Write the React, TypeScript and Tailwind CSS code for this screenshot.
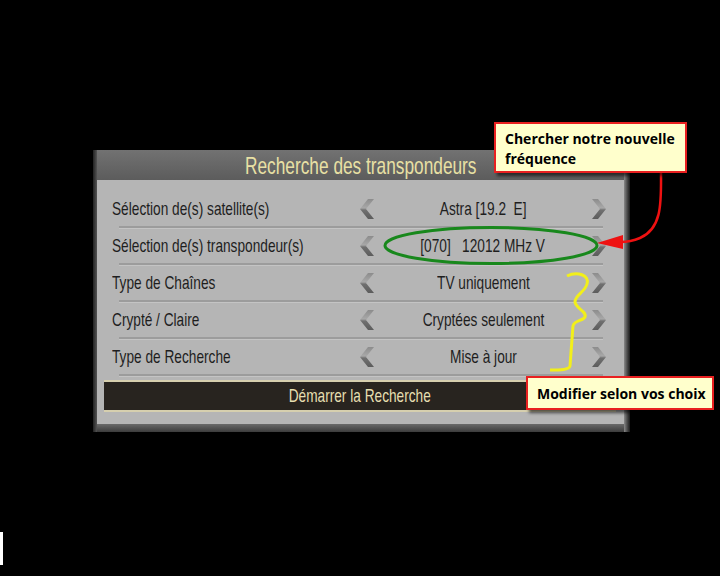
import React from "react";

const rows = [
  { label: "Sélection de(s) satellite(s)", value: "Astra [19.2\u00a0\u00a0E]" },
  { label: "Sélection de(s) transpondeur(s)", value: "[070]\u00a0\u00a0\u00a012012 MHz V" },
  { label: "Type de Chaînes", value: "TV uniquement" },
  { label: "Crypté / Claire", value: "Cryptées seulement" },
  { label: "Type de Recherche", value: "Mise à jour" },
];

const sans = { fontFamily: '"Liberation Sans", Arial, sans-serif' };

function Chevron({ dir }: { dir: "left" | "right" }) {
  const pts = dir === "left" ? "8,0 14,0 6,10 14,20 8,20 0,10" : "0,0 6,0 14,10 6,20 0,20 8,10";
  const id = dir === "left" ? "gl" : "gr";
  return (
    <svg width="14" height="20" viewBox="0 0 14 20" className="shrink-0">
      <defs>
        <linearGradient id={id} x1="0" y1="0" x2="0" y2="1">
          <stop offset="0" stopColor="#8c8c8c" />
          <stop offset="0.45" stopColor="#a8a8a8" />
          <stop offset="0.55" stopColor="#707070" />
          <stop offset="1" stopColor="#5c5c5c" />
        </linearGradient>
      </defs>
      <polygon points={pts} fill={`url(#${id})`} />
    </svg>
  );
}

export default function App() {
  return (
    <div className="relative w-[720px] h-[576px] bg-black overflow-hidden">
      <div className="pt-[150px] pl-[93px]">
        <div className="w-[537px] flex">
          <div className="w-[4px] bg-gradient-to-r from-[#222] to-[#555]" />
          <div className="w-[527px] flex flex-col">
            <div className="h-[30px] bg-gradient-to-b from-[#727272] to-[#5c5c5c] flex items-center justify-center">
              <span
                className="inline-block whitespace-nowrap text-[24px] text-[#e8e0a4] leading-none pt-[2px] scale-x-[0.72] origin-center"
                style={sans}
              >
                Recherche des transpondeurs
              </span>
            </div>
            <div className="bg-[#b5b5b5] pt-[12px] pb-[12px] flex flex-col">
              {rows.map((r) => (
                <div key={r.label} className="h-[37px] flex flex-col">
                  <div className="flex-1 flex items-center">
                    <div className="w-[263px] pl-[15px] shrink-0">
                      <span
                        className="inline-block whitespace-nowrap text-[19px] text-[#1e1e1e] scale-x-[0.72] origin-left"
                        style={sans}
                      >
                        {r.label}
                      </span>
                    </div>
                    <Chevron dir="left" />
                    <div className="w-[218px] shrink-0 flex justify-center">
                      <span
                        className="inline-block whitespace-nowrap text-[19px] text-[#1e1e1e] scale-x-[0.72] origin-center"
                        style={sans}
                      >
                        {r.value}
                      </span>
                    </div>
                    <Chevron dir="right" />
                  </div>
                  <div className="ml-[22px] w-[484px] h-[2px] bg-[#9c9c9c] border-b border-[#c4c4c4] box-content" />
                </div>
              ))}
              <div className="mt-[3px] ml-[7px] w-[512px] border-t-2 border-b-2 border-[#d6cfae] bg-[#28241f] h-[32px] flex items-center justify-center">
                <span
                  className="inline-block whitespace-nowrap text-[19px] text-[#e6dfb0] scale-x-[0.72] origin-center"
                  style={sans}
                >
                  Démarrer la Recherche
                </span>
              </div>
            </div>
            <div className="h-[8px] bg-gradient-to-b from-[#6a6a6a] to-[#3c3c3c]" />
          </div>
          <div className="w-[6px] bg-gradient-to-r from-[#8a8a8a] to-[#1a1a1a]" />
        </div>
      </div>

      <svg className="absolute inset-0 pointer-events-none" width="720" height="576" viewBox="0 0 720 576">
        <ellipse cx="491" cy="245.5" rx="106" ry="18" fill="none" stroke="#18881c" strokeWidth="3" />
        <path d="M661,172 C661,200 663,228 640,238 C633,241 628,242 620,242" fill="none" stroke="#ee1111" strokeWidth="2.5" />
        <polygon points="597,243 623,235 623,249" fill="#ee1111" />
        <path
          d="M567,276 C577,271 590,275 587,284 C585,292 575,295 575,302 C576,309 587,311 585,317 C583,321 574,320 573,326 L570,366 C569,370 560,370 550,370"
          fill="none"
          stroke="#f2ef1a"
          strokeWidth="3"
        />
      </svg>

      <div className="absolute left-[494px] top-[122px] w-[193px] h-[51px] bg-[#ffffcc] border-2 border-[#e82020] shadow-[3px_3px_3px_rgba(0,0,0,0.6)] pl-[9px] pt-[5px]">
        <div className="text-[14px] font-bold leading-[20px] text-black" style={{ fontFamily: '"Open Sans", "DejaVu Sans", sans-serif' }}>
          Chercher notre nouvelle
          <br />
          fréquence
        </div>
      </div>

      <div className="absolute left-[526px] top-[376px] w-[188px] h-[34px] bg-[#ffffcc] border-2 border-[#e82020] shadow-[3px_3px_3px_rgba(0,0,0,0.6)] pl-[9px] flex items-center">
        <span className="text-[14px] font-bold text-black whitespace-nowrap" style={{ fontFamily: '"Open Sans", "DejaVu Sans", sans-serif' }}>
          Modifier selon vos choix
        </span>
      </div>

      <div className="absolute left-0 top-[532px] w-[3px] h-[33px] bg-white" />
    </div>
  );
}
